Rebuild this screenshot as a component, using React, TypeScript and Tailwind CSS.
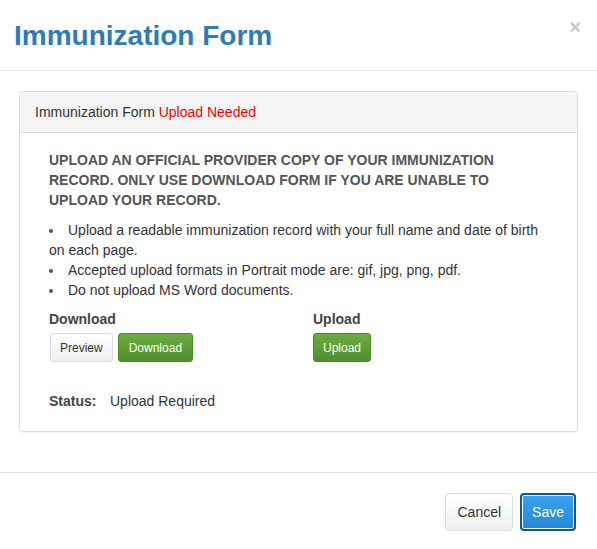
export default function App() {
  const items = [
    'Upload a readable immunization record with your full name and date of birth on each page.',
    'Accepted upload formats in Portrait mode are: gif, jpg, png, pdf.',
    'Do not upload MS Word documents.',
  ];
  return (
    <div className="w-[597px] h-[549px] bg-white text-[14px] text-[#333] font-['Liberation_Sans',Arial,sans-serif] flex flex-col">
      <div className="h-[71px] border-b border-[#e5e5e5] flex items-start justify-between pl-[14px] pr-[16px] pt-[16px]">
        <h1 className="text-[28px] font-bold text-[#2f7bb2] leading-[40px]">Immunization Form</h1>
        <span className="text-[20px] font-bold text-[#c8c8c8] leading-[20px] mt-[1px]">×</span>
      </div>
      <div className="px-[19px] pt-[20px] h-[401px]">
        <div className="border border-[#dddddd] rounded-[4px] shadow-[0_1px_1px_rgba(0,0,0,0.05)]">
          <div className="h-[41px] bg-[#f5f5f5] border-b border-[#dddddd] rounded-t-[4px] px-[15px] flex items-center">
            <span>Immunization Form <span className="text-[#ff0000]">Upload Needed</span></span>
          </div>
          <div className="pl-[29px] pr-[20px] pt-[17px] pb-[20px]">
            <p className="w-[460px] font-bold text-[#555] leading-[20px] uppercase">
              Upload an official provider copy of your immunization record. Only use download form if you are unable to upload your record.
            </p>
            <ul className="mt-[10px] leading-[20px] text-[#333]">
              {items.map((t) => (
                <li key={t}>
                  <span className="inline-block w-[4px] h-[4px] rounded-full bg-[#555] align-middle mr-[15px]" />
                  {t}
                </li>
              ))}
            </ul>
            <div className="flex mt-[9px]">
              <div className="w-[264px]">
                <div className="font-bold text-[#444] leading-[20px]">Download</div>
                <div className="flex gap-[5px] mt-[4px] pl-[1px]">
                  <button className="h-[29px] px-[9px] text-[12px] text-[#333] bg-gradient-to-b from-white to-[#f0f0f0] border border-[#dcdcdc] rounded-[3px]">Preview</button>
                  <button className="h-[29px] px-[10px] text-[12px] text-white bg-gradient-to-b from-[#6cad40] to-[#4f8f2d] border border-[#4a8a2b] rounded-[3px]">Download</button>
                </div>
              </div>
              <div>
                <div className="font-bold text-[#444] leading-[20px]">Upload</div>
                <div className="flex mt-[4px]">
                  <button className="h-[29px] px-[9px] text-[12px] text-white bg-gradient-to-b from-[#6cad40] to-[#4f8f2d] border border-[#4a8a2b] rounded-[3px]">Upload</button>
                </div>
              </div>
            </div>
            <div className="mt-[29px] flex leading-[20px]">
              <span className="font-bold text-[#444] w-[61px]">Status:</span>
              <span>Upload Required</span>
            </div>
          </div>
        </div>
      </div>
      <div className="border-t border-[#e5e5e5] flex justify-end gap-[7px] pr-[21px] pt-[20px]">
        <button className="h-[38px] px-[11px] text-[14px] text-[#333] bg-gradient-to-b from-white to-[#f0f0f0] border border-[#dcdcdc] rounded-[4px]">Cancel</button>
        <button className="h-[38px] px-[10px] text-[14px] text-white bg-gradient-to-b from-[#3aa2ec] to-[#2488d8] border-2 border-[#0b5a9e] rounded-[4px] shadow-[inset_0_0_0_1px_white]">Save</button>
      </div>
    </div>
  );
}
